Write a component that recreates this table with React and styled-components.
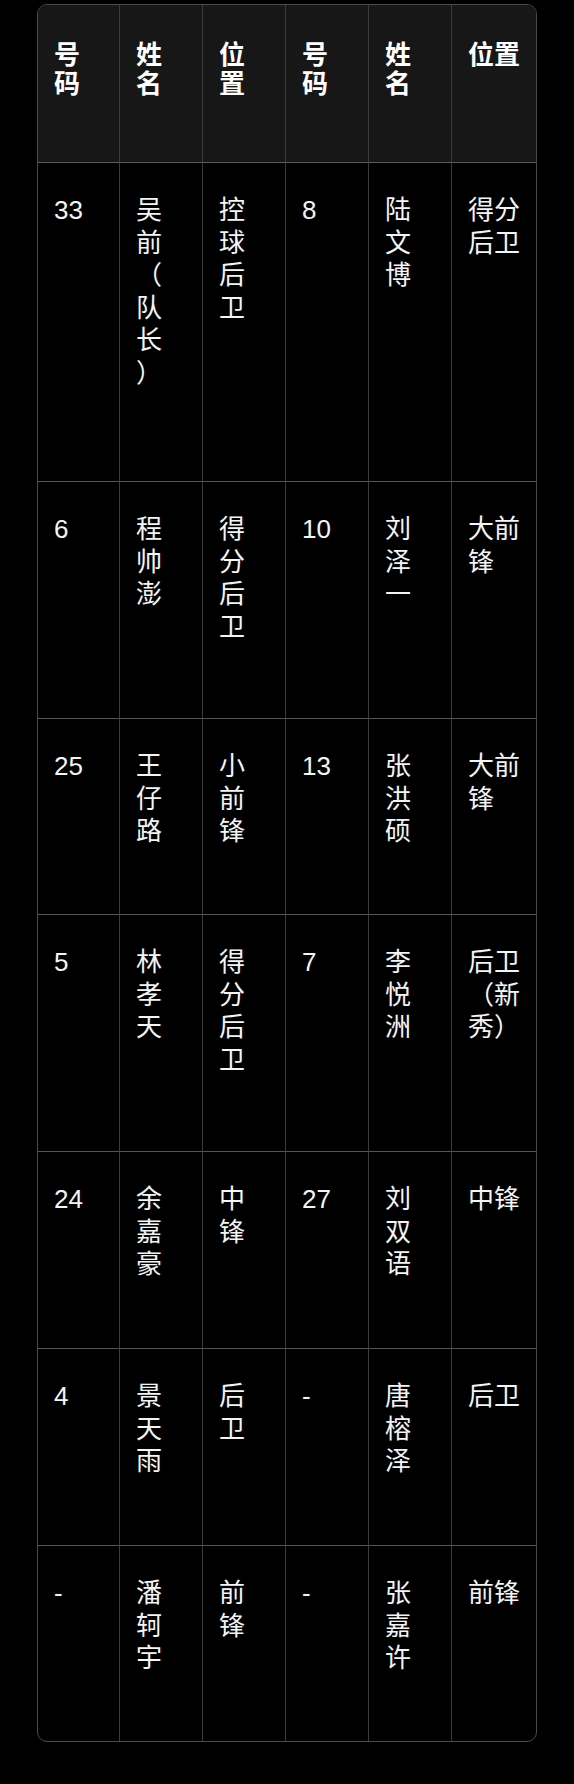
import React from 'react';
import styled, { createGlobalStyle } from 'styled-components';

const GlobalStyle = createGlobalStyle`
  html, body {
    margin: 0;
    padding: 0;
    background: #000;
  }
`;

const headers = ['号码', '姓名', '位置', '号码', '姓名', '位置'];
const widths = [82, 83, 83, 83, 83, 84];

const rows = [
  { h: 319, cells: ['33', '吴前（队长）', '控球后卫', '8', '陆文博', '得分后卫'] },
  { h: 237, cells: ['6', '程帅澎', '得分后卫', '10', '刘泽一', '大前锋'] },
  { h: 196, cells: ['25', '王仔路', '小前锋', '13', '张洪硕', '大前锋'] },
  { h: 237, cells: ['5', '林孝天', '得分后卫', '7', '李悦洲', '后卫（新秀）'] },
  { h: 197, cells: ['24', '余嘉豪', '中锋', '27', '刘双语', '中锋'] },
  { h: 197, cells: ['4', '景天雨', '后卫', '-', '唐榕泽', '后卫'] },
  { h: 195, cells: ['-', '潘轲宇', '前锋', '-', '张嘉许', '前锋'] },
];

const App = () => {
  return (
    <Page>
      <GlobalStyle />
      <Roster>
        <thead>
          <tr>
            {headers.map((t, i) => (
              <HeadCell key={i} $w={widths[i]}>{t}</HeadCell>
            ))}
          </tr>
        </thead>
        <tbody>
          {rows.map((row, r) => (
            <tr key={r}>
              {row.cells.map((c, i) => (
                <Cell key={i} $h={row.h}>{c}</Cell>
              ))}
            </tr>
          ))}
        </tbody>
      </Roster>
    </Page>
  );
};

const Page = styled.div`
  min-height: 1784px;
  box-sizing: border-box;
  padding: 4px 37px 0 37px;
  background: #000;
  font-family: "Liberation Sans", "Noto Sans CJK SC", sans-serif;
`;

const Roster = styled.table`
  width: 500px;
  box-sizing: border-box;
  table-layout: fixed;
  border-collapse: separate;
  border-spacing: 0;
  border: 1px solid #4a4a4a;
  border-radius: 10px;
  overflow: hidden;
  color: #f4f4f4;
  font-size: 26px;
  text-spacing-trim: space-all;
`;

const HeadCell = styled.th`
  width: ${p => p.$w}px;
  height: 158px;
  box-sizing: border-box;
  padding: 36px 15px 0 16px;
  vertical-align: top;
  text-align: left;
  font-weight: 700;
  line-height: 29px;
  color: #fff;
  background: #171717;
  border-right: 1px solid #3c3c3c;
  border-bottom: 1px solid #5a5a5a;
  overflow-wrap: anywhere;

  &:last-child {
    border-right: none;
  }
`;

const Cell = styled.td`
  height: ${p => p.$h}px;
  box-sizing: border-box;
  padding: 31px 15px 0 16px;
  vertical-align: top;
  line-height: 32.5px;
  border-right: 1px solid #3c3c3c;
  border-bottom: 1px solid #555;
  overflow-wrap: anywhere;
  text-spacing-trim: space-all;

  &:last-child {
    border-right: none;
  }

  tr:last-child > & {
    border-bottom: none;
  }
`;

export default App;
